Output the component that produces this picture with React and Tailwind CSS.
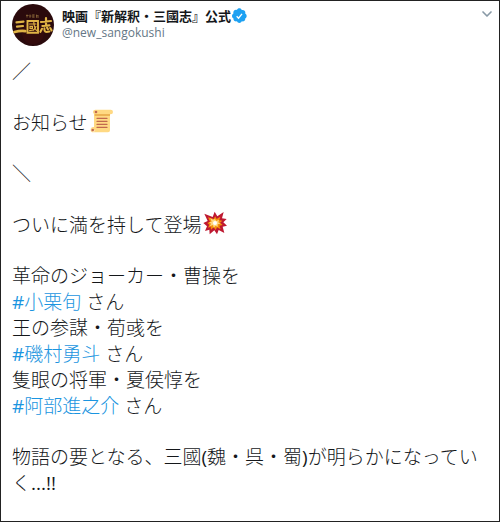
import React from "react";
import { ChevronDown } from "lucide-react";

const Avatar = () => (
  <svg viewBox="0 0 42 42" className="size-[42px] shrink-0" aria-hidden="true">
    <circle cx="21" cy="21" r="21" fill="#2a0a0c" />
    <circle cx="21" cy="29" r="11" fill="#3a0b0d" opacity="0.6" />
    <g stroke="#8d6a3a" strokeWidth="0.8" fill="none">
      <path d="M15 10.5v3M14 11.5h2.5M18 10.5v3.4M17.4 12h2M21 10.4v3.4M20.4 11h2.4M20.4 13h2.4M24.5 10.6v3.2M24 11.6h2.6M26 12v2" />
    </g>
    <g stroke="#e0b445" fill="none" strokeLinecap="round">
      <path d="M4.5 18.4l7-.8M5 22.6l6-.6" strokeWidth="2.2" />
      <path d="M2.5 28c3-.8 7-1.3 10.8-.9" strokeWidth="2.7" />
      <path d="M15.5 17h10.5v11.8h-10.5z" strokeWidth="1.9" />
      <path d="M17.5 20h6.5M18 22.4h2.4v2h-2.4zM17.6 26.6l3.6-.6M21.8 18.3c.2 3 .8 6 2.6 8M24 22.6l-2.4 3.6" strokeWidth="1.2" />
      <path d="M29 18l10-1M34 14.2v7.4M30.4 22l7-.6" strokeWidth="2.2" />
      <path d="M30 24.8l-1.6 3M32.4 24.4c-.2 3.6 1 4.2 5 3.2M35 23.6l1 1.6M38.2 24l1.4 2.4" strokeWidth="2.1" />
    </g>
  </svg>
);

const VerifiedBadge = () => (
  <svg viewBox="0 0 24 24" className="size-4 shrink-0" role="img" aria-label="認証済み">
    <path
      fill="#1da1f2"
      d="M23.5 12c0-1.6-.9-3-2.2-3.6.2-.5.2-1 .2-1.5 0-2.3-1.8-4-4-4-.5 0-1 .1-1.4.2C15.5 1.5 14.2.5 12.5.5s-3 1-3.6 2.5C8.4 2.8 8 2.8 7.5 2.8c-2.2 0-4 1.8-4 4.1 0 .5.1 1 .2 1.5C2.4 9 1.5 10.4 1.5 12s.8 2.9 2.1 3.5v.6c0 2.3 1.8 4 4 4 .5 0 1-.1 1.4-.2.6 1.5 2 2.5 3.5 2.5s3-1 3.6-2.5c.4.2.9.2 1.4.2 2.2 0 4-1.7 4-4v-.6c1.2-.6 2-2 2-3.5z"
    />
    <path d="M8.5 12.5l2.8 2.8 5.2-6.6" fill="none" stroke="#fff" strokeWidth="2" />
  </svg>
);

const Scroll = () => (
  <svg viewBox="0 0 36 36" className="-mt-2 ml-[2px] inline-block size-6 align-[-3px]" role="img" aria-label="巻物">
    <path fill="#ffd983" d="M8 1h23a3.5 3.5 0 013.5 3.5A3.5 3.5 0 0131 8h-1v24a3 3 0 01-3 3H5a4 4 0 010-8h1V7C4 6 4 1 8 1z" />
    <path fill="#e39f3d" d="M7 8H30v2H7z" />
    <path fill="#ffe8b6" d="M3 29a3 3 0 105 3h-3z" />
    <circle cx="9" cy="4.5" r="2" fill="#c1694f" />
    <circle cx="4" cy="31.5" r="2" fill="#c1694f" />
    <path d="M10.5 14h15M10.5 18.5h15M10.5 23h15M10.5 27.5h15" stroke="#c1694f" strokeWidth="2" strokeLinecap="round" />
  </svg>
);

const Collision = () => (
  <svg viewBox="0 0 36 36" className="-mt-2 ml-[2px] inline-block size-6 align-[-3px]" role="img" aria-label="衝突">
    <path
      fill="#be1931"
      d="M14.500 9L17.500 1l4 7L31 1.500 28.500 11l7 1-5 5 5.500 5-6.500 1.500L32 33l-8.500-4.500L21 35l-4-6-7 6-.5-7L3 30l3-7-5.500-5L7 15 2 4z"
    />
    <path
      fill="#f4900c"
      d="M16 12l2.300-4 2.200 4 5.500-3.500-1.500 5.500 4.500.5-3.500 3 4 3.500-5 1 2 5.500-5.500-3-2 4-3-4-4 3.500-.5-4.500-4 1.500 2-4.500-3-2.500 4-2L7.500 9.500z"
    />
    <path fill="#ffd983" d="M18 12l2 3 4-2-1 4 3 2-4 1v4l-3-2-3 3-1-4-5 2 2-4-3-2 4-1-2-5 4 2z" />
    <circle cx="18" cy="18" r="3" fill="#fff" />
  </svg>
);

const cast = [
  { role: "革命のジョーカー・曹操を", name: "小栗旬" },
  { role: "王の参謀・荀彧を", name: "磯村勇斗" },
  { role: "隻眼の将軍・夏侯惇を", name: "阿部進之介" },
];

const App = () => {
  return (
    <article
      lang="ja"
      className="min-h-screen border border-[#222222] bg-white pt-[3px] pr-1 pl-[11px] font-['Open_Sans','Noto_Sans_CJK_JP',sans-serif] text-[#14171a]"
    >
      <header className="flex items-start gap-2">
        <Avatar />
        <div className="min-w-0 flex-1 pt-1">
          <div className="flex items-center">
            <a href="#profile" className="text-[13px] leading-4 font-bold">
              映画『新解釈・三國志』公式
            </a>
            <VerifiedBadge />
          </div>
          <p className="text-[12px] leading-[18px] text-[#657786]">@new_sangokushi</p>
        </div>
        <button aria-label="メニュー" className="pt-[2px] text-[#8899a6]">
          <ChevronDown className="size-4" strokeWidth={2.5} />
        </button>
      </header>

      <div className="mt-[13px] flex flex-col gap-[25px] text-[19px] leading-[26px] font-light">
        <p>／</p>
        <p>
          お知らせ
          <Scroll />
        </p>
        <p>＼</p>
        <p>
          ついに満を持して登場
          <Collision />
        </p>
        <div>
          {cast.map(({ role, name }) => (
            <p key={name}>
              {role}
              <br />
              <a href="#hashtag" className="text-[#1b95e0]">
                <span className="font-normal">#</span>
                {name}
              </a>{" "}
              さん
            </p>
          ))}
        </div>
        <p>
          物語の要となる、三國<span className="font-normal">(</span>魏・呉・蜀
          <span className="font-normal">)</span>が明らかになっていく
          <span className="font-normal">...!!</span>
        </p>
      </div>
    </article>
  );
};

export default App;
